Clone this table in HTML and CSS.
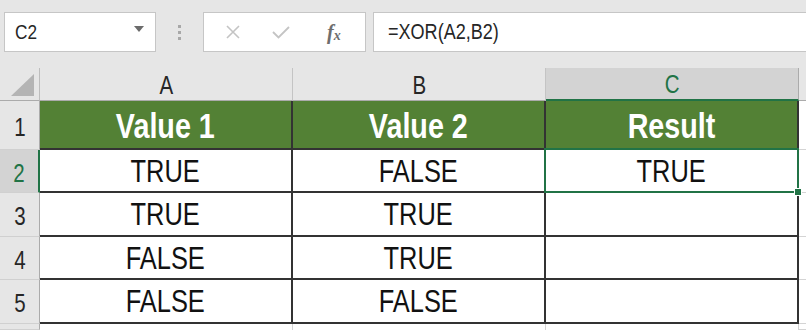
FILE: index.html
```html
<!DOCTYPE html>
<html lang="en">
<head>
    <meta charset="UTF-8">
    <title>XOR - Sheet1</title>
    <link rel="stylesheet" href="styles.css">
</head>
<body>
    <div class="app">
        <div class="toolbar">
            <div class="namebox">
                <span class="t left">C2</span>
                <svg class="caret" width="10" height="6" viewBox="0 0 10 6"><path d="M0 0h10L5 6z" fill="#6b6b6b"/></svg>
            </div>
            <div class="grip"><i></i><i></i><i></i></div>
            <div class="fx-buttons">
                <svg width="16" height="16" viewBox="0 0 16 16"><path d="M2 2l12 12M14 2L2 14" stroke="#c4c4c4" stroke-width="1.6" fill="none"/></svg>
                <svg width="20" height="16" viewBox="0 0 20 16"><path d="M2 8l5.5 5.5L18 3" stroke="#c4c4c4" stroke-width="1.8" fill="none"/></svg>
                <span class="fx">f<sub>x</sub></span>
            </div>
            <div class="formula"><span class="t left">=XOR(A2,B2)</span></div>
        </div>

        <div class="sheet">
            <div class="corner"><span class="corner-tri"></span></div>
            <div class="col-head"><span class="t">A</span></div>
            <div class="col-head"><span class="t">B</span></div>
            <div class="col-head active"><span class="t">C</span></div>
            <div class="col-head last"></div>

            <div class="row-head"><span class="t">1</span></div>
            <div class="cell title"><span class="t">Value 1</span></div>
            <div class="cell title"><span class="t">Value 2</span></div>
            <div class="cell title"><span class="t">Result</span></div>
            <div class="cell blank"></div>

            <div class="row-head active"><span class="t">2</span></div>
            <div class="cell"><span class="t">TRUE</span></div>
            <div class="cell"><span class="t">FALSE</span></div>
            <div class="cell selected"><span class="t">TRUE</span><span class="handle"></span></div>
            <div class="cell blank"></div>

            <div class="row-head"><span class="t">3</span></div>
            <div class="cell"><span class="t">TRUE</span></div>
            <div class="cell"><span class="t">TRUE</span></div>
            <div class="cell"></div>
            <div class="cell blank"></div>

            <div class="row-head"><span class="t">4</span></div>
            <div class="cell"><span class="t">FALSE</span></div>
            <div class="cell"><span class="t">TRUE</span></div>
            <div class="cell"></div>
            <div class="cell blank"></div>

            <div class="row-head"><span class="t">5</span></div>
            <div class="cell"><span class="t">FALSE</span></div>
            <div class="cell"><span class="t">FALSE</span></div>
            <div class="cell"></div>
            <div class="cell blank"></div>

            <div class="row-head"></div>
            <div class="cell empty"></div>
            <div class="cell empty"></div>
            <div class="cell empty"></div>
            <div class="cell blank"></div>
        </div>
    </div>
</body>
</html>
```

FILE: styles.css
```css
* {
    margin: 0;
    padding: 0;
    box-sizing: border-box;
}

body {
    background-color: #e6e6e6;
    font-family: "Liberation Sans", Arial, sans-serif;
    overflow: hidden;
}

.app {
    width: 806px;
    height: 330px;
    overflow: hidden;
}

/* narrow text, like Arial Narrow */
.t {
    display: inline-block;
    transform: scaleX(0.82);
    white-space: nowrap;
}

.t.left {
    transform-origin: left center;
}

/* formula bar */
.toolbar {
    height: 68px;
    display: flex;
    padding: 12px 0 16px 4px;
    background-color: #e6e6e6;
}

.namebox {
    width: 152px;
    background-color: white;
    border: 1px solid #c6c6c6;
    display: flex;
    align-items: center;
    justify-content: space-between;
    padding: 0 11px 0 10px;
    font-size: 21px;
    color: #262626;
}

.caret {
    margin-top: -6px;
}

.grip {
    width: 47px;
    display: flex;
    flex-direction: column;
    align-items: center;
    justify-content: center;
    gap: 3px;
}

.grip i {
    width: 3px;
    height: 3px;
    background-color: #a8a8a8;
}

.fx-buttons {
    width: 163px;
    background-color: white;
    border: 1px solid #c6c6c6;
    display: flex;
    align-items: center;
    padding-left: 21px;
    gap: 30px;
}

.fx {
    font-family: "Liberation Serif", serif;
    font-style: italic;
    font-weight: bold;
    font-size: 20px;
    color: #6e6e6e;
    margin-left: 6px;
}

.fx sub {
    font-size: 14px;
    vertical-align: -1px;
}

.formula {
    flex: 1;
    margin-left: 7px;
    margin-right: -4px;
    background-color: white;
    border: 1px solid #c6c6c6;
    display: flex;
    align-items: center;
    padding-left: 14px;
    font-size: 22px;
    color: #262626;
}

/* grid */
.sheet {
    display: grid;
    grid-template-columns: 40px 253px 253px 253px 1fr;
    grid-template-rows: 33px 49px 43px 44px 43px 44px 1fr;
    height: 262px;
    background-color: white;
}

.corner {
    background-color: #e6e6e6;
    border-right: 1px solid #bdbdbd;
    border-bottom: 1px solid #ababab;
    display: flex;
    align-items: flex-end;
    justify-content: flex-end;
    padding: 0 5px 4px 0;
}

.corner-tri {
    width: 23px;
    height: 22px;
    background-color: #b4b4b4;
    clip-path: polygon(100% 0, 100% 100%, 0 100%);
}

.col-head {
    background-color: #e6e6e6;
    border-right: 1px solid #c4c4c4;
    border-bottom: 1px solid #ababab;
    display: flex;
    align-items: center;
    justify-content: center;
    font-size: 25px;
    color: #262626;
    padding-top: 2px;
}

.col-head.active {
    background-color: #d3d3d3;
    color: #217346;
    border-bottom: 2px solid #217346;
    border-right-color: #ababab;
}

.col-head.last {
    border-right: none;
}

.row-head {
    background-color: #e6e6e6;
    border-right: 1px solid #ababab;
    border-bottom: 1px solid #d0d0d0;
    display: flex;
    align-items: center;
    justify-content: center;
    font-size: 25px;
    color: #262626;
    padding-top: 4px;
}

.row-head.active {
    background-color: #d3d3d3;
    color: #217346;
    border-right: 2px solid #217346;
}

.cell {
    border-right: 2px solid #333;
    border-bottom: 2px solid #333;
    display: flex;
    align-items: center;
    justify-content: center;
    font-size: 31px;
    color: #111;
    padding-top: 2px;
    position: relative;
}

.cell.title {
    background-color: #538135;
    color: white;
    font-weight: bold;
    font-size: 35px;
}

.cell.blank {
    border-right: none;
    border-bottom: 1px solid #d4d4d4;
}

.cell.empty {
    border-bottom: none;
    border-right: 1px solid #d4d4d4;
}

/* active cell outline */
.cell.selected::after {
    content: "";
    position: absolute;
    left: -2px;
    top: -2px;
    right: -2px;
    bottom: -2px;
    border: 2px solid #217346;
}

.handle {
    position: absolute;
    right: -5px;
    bottom: -5px;
    width: 8px;
    height: 8px;
    background-color: #217346;
    border: 1px solid white;
    z-index: 2;
}
```
